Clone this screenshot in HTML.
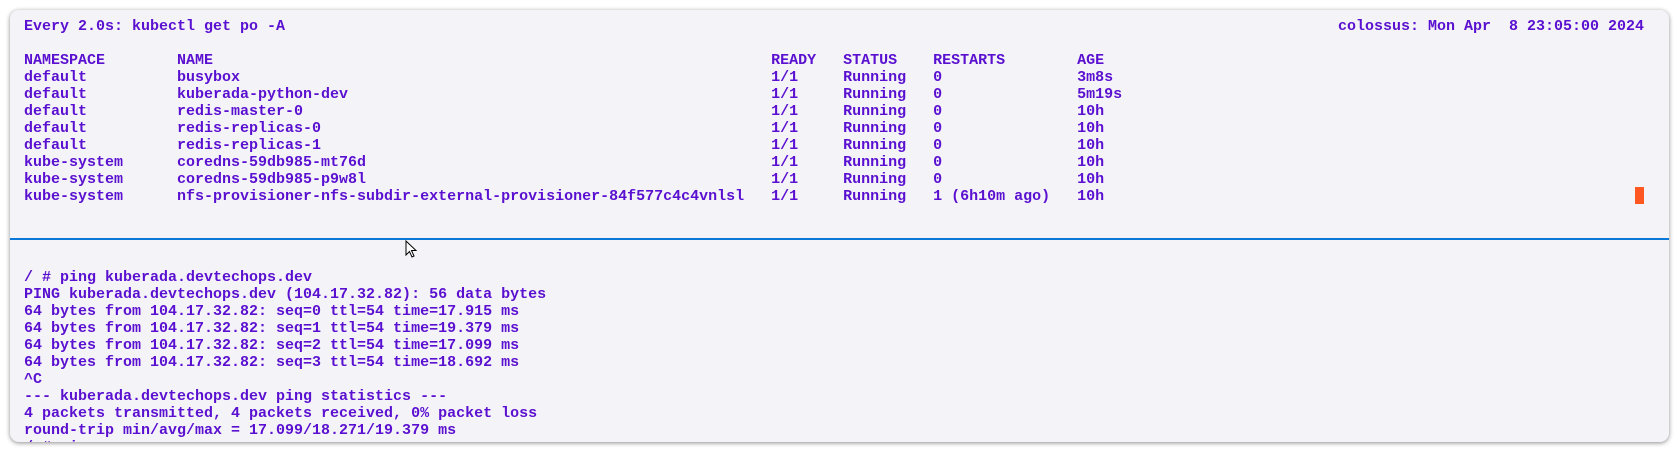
<!DOCTYPE html>
<html><head><meta charset="utf-8"><style>
html,body{margin:0;padding:0;background:#fff;width:1679px;height:452px;overflow:hidden}
.win{position:absolute;left:10px;top:10px;width:1659px;height:432px;background:#f4f3f7;border-radius:9px;box-shadow:0 1px 5px rgba(0,0,0,.45);overflow:hidden}
pre{position:absolute;margin:0;font-family:"Liberation Mono",monospace;font-weight:bold;font-size:15px;line-height:17px;color:#5a10d0;white-space:pre}
.line{position:absolute;left:0;top:228px;width:1659px;height:2px;background:#0a78d7}
.cur{position:absolute;left:1625px;top:177px;width:9px;height:17px;background:#ff5722}
</style></head><body>
<div class="win">
<pre style="left:14px;top:8px">Every 2.0s: kubectl get po -A

NAMESPACE        NAME                                                              READY   STATUS    RESTARTS        AGE
default          busybox                                                           1/1     Running   0               3m8s
default          kuberada-python-dev                                               1/1     Running   0               5m19s
default          redis-master-0                                                    1/1     Running   0               10h
default          redis-replicas-0                                                  1/1     Running   0               10h
default          redis-replicas-1                                                  1/1     Running   0               10h
kube-system      coredns-59db985-mt76d                                             1/1     Running   0               10h
kube-system      coredns-59db985-p9w8l                                             1/1     Running   0               10h
kube-system      nfs-provisioner-nfs-subdir-external-provisioner-84f577c4c4vnlsl   1/1     Running   1 (6h10m ago)   10h</pre>
<pre style="left:1328px;top:8px">colossus: Mon Apr  8 23:05:00 2024</pre>
<div class="cur"></div>
<div class="line"></div>
<pre style="left:14px;top:259px">/ # ping kuberada.devtechops.dev
PING kuberada.devtechops.dev (104.17.32.82): 56 data bytes
64 bytes from 104.17.32.82: seq=0 ttl=54 time=17.915 ms
64 bytes from 104.17.32.82: seq=1 ttl=54 time=19.379 ms
64 bytes from 104.17.32.82: seq=2 ttl=54 time=17.099 ms
64 bytes from 104.17.32.82: seq=3 ttl=54 time=18.692 ms
^C
--- kuberada.devtechops.dev ping statistics ---
4 packets transmitted, 4 packets received, 0% packet loss
round-trip min/avg/max = 17.099/18.271/19.379 ms
/ # ping</pre>
<svg style="position:absolute;left:395px;top:230px" width="14" height="20" viewBox="0 0 14 20"><path d="M1 1 L1 15 L4.5 11.5 L7 17 L9 16 L6.5 10.5 L11 10.5 Z" fill="#fff" stroke="#000" stroke-width="1"/></svg>
</div>
</body></html>
